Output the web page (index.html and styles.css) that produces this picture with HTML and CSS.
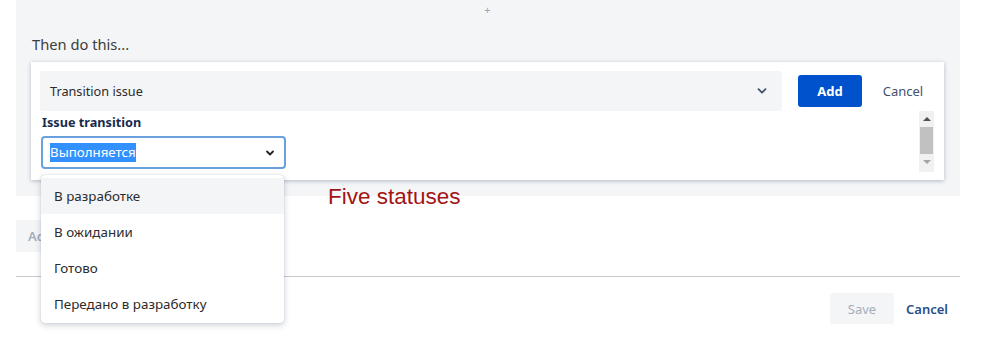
FILE: index.html
```html
<!DOCTYPE html>
<html lang="en">
<head>
    <meta charset="UTF-8">
    <title>Automation rule - Then do this</title>
    <link rel="stylesheet" href="styles.css">
</head>
<body>
    <div class="rule-panel">
        <div class="add-step">+</div>
        <div class="section-title">Then do this...</div>

        <div class="action-card">
            <div class="action-row">
                <div class="action-select">
                    <span>Transition issue</span>
                    <svg class="chevron" width="12" height="12" viewBox="0 0 12 12">
                        <path d="M2.5 4.2 L6 7.7 L9.5 4.2" fill="none" stroke="#42526e" stroke-width="1.8" stroke-linecap="round" stroke-linejoin="round"/>
                    </svg>
                </div>
                <button class="btn-primary">Add</button>
                <button class="btn-subtle">Cancel</button>
            </div>

            <div class="action-body">
                <div class="field">
                    <div class="field-label">Issue transition</div>
                    <div class="status-select">
                        <span class="selected-text">Выполняется</span>
                        <svg class="chevron" width="10" height="10" viewBox="0 0 10 10">
                            <path d="M2 3.5 L5 6.5 L8 3.5" fill="none" stroke="#222" stroke-width="1.8" stroke-linecap="round" stroke-linejoin="round"/>
                        </svg>

                        <!-- open dropdown -->
                        <ul class="status-menu">
                            <li class="active">В разработке</li>
                            <li>В ожидании</li>
                            <li>Готово</li>
                            <li>Передано в разработку</li>
                        </ul>
                    </div>
                </div>

                <div class="scrollbar">
                    <div class="scroll-up"></div>
                    <div class="scroll-thumb"></div>
                    <div class="scroll-down"></div>
                </div>
            </div>
        </div>
    </div>

    <div class="annotation">Five statuses</div>

    <div class="footer-area">
        <button class="btn-disabled">Add component</button>
        <div class="divider"></div>
        <div class="footer-actions">
            <button class="btn-save">Save</button>
            <button class="btn-link">Cancel</button>
        </div>
    </div>
</body>
</html>
```

FILE: styles.css
```css
* {
    margin: 0;
    padding: 0;
    box-sizing: border-box;
}

body {
    font-family: 'Noto Sans', 'Open Sans', sans-serif;
    background: #fff;
    color: #172b4d;
    width: 988px;
    height: 350px;
    overflow: hidden;
    position: relative;
}

button {
    font-family: inherit;
    border: none;
    cursor: pointer;
}

.rule-panel {
    margin: 0 28px 0 16px;
    height: 196px;
    background: #f4f5f7;
    padding: 0 16px 0 15px;
}

.add-step {
    height: 20px;
    line-height: 20px;
    text-align: center;
    font-size: 11px;
    color: #a0a4ab;
}

.section-title {
    margin-top: 14px;
    padding-left: 1px;
    font-size: 14.7px;
    line-height: 20px;
    color: #3d3d3d;
}

.action-card {
    margin-top: 8px;
    height: 118px;
    background: #fff;
    box-shadow: 0 1px 4px rgba(9, 30, 66, 0.28);
    padding: 9px 8px 8px 9px;
}

.action-row {
    display: flex;
    align-items: center;
    height: 40px;
}

.action-select {
    flex: 1;
    height: 40px;
    background: #f4f5f7;
    border-radius: 3px;
    display: flex;
    align-items: center;
    justify-content: space-between;
    padding: 0 14px 0 10px;
    font-size: 12.7px;
    color: #2b2b2b;
}

.btn-primary {
    margin-left: 16px;
    width: 64px;
    height: 32px;
    background: #0052cc;
    color: #fff;
    font-weight: 700;
    font-size: 13px;
    border-radius: 3px;
}

.btn-subtle {
    margin-left: 8px;
    width: 66px;
    height: 32px;
    background: transparent;
    color: #42526e;
    font-size: 13px;
}

.action-body {
    display: flex;
    justify-content: space-between;
    height: 61px;
}

.field {
    padding: 3px 0 0 1px;
}

.field-label {
    height: 16px;
    line-height: 16px;
    font-size: 12.7px;
    font-weight: 700;
    color: #172b4d;
    padding-left: 1px;
}

.status-select {
    position: relative;
    margin-top: 6px;
    width: 245px;
    height: 33px;
    border: 2px solid #6aa0dc;
    border-radius: 4px;
    display: flex;
    align-items: center;
    justify-content: space-between;
    padding: 0 9px 0 7px;
}

.selected-text {
    background: #3390ff;
    color: #fff;
    font-size: 13.3px;
    line-height: 19px;
}

.status-menu {
    position: absolute;
    top: 37px;
    left: -2px;
    width: 243px;
    list-style: none;
    background: #fff;
    border-radius: 4px;
    box-shadow: 0 2px 6px rgba(9, 30, 66, 0.22), 0 0 1px rgba(9, 30, 66, 0.3);
    padding: 3px 0 1px;
    z-index: 5;
}

.status-menu li {
    height: 36px;
    line-height: 36px;
    padding-left: 13px;
    font-size: 13.4px;
    color: #2b2b2b;
}

.status-menu li.active {
    background: #f4f5f7;
}

.scrollbar {
    width: 15px;
    height: 61px;
    margin-right: 2px;
    background: #f1f1f1;
    display: flex;
    flex-direction: column;
    align-items: center;
}

.scroll-up {
    margin-top: 6px;
    width: 0;
    height: 0;
    border-left: 4px solid transparent;
    border-right: 4px solid transparent;
    border-bottom: 4px solid #505050;
}

.scroll-thumb {
    margin-top: 6px;
    width: 13px;
    height: 27px;
    background: #c1c1c1;
}

.scroll-down {
    margin-top: 6px;
    width: 0;
    height: 0;
    border-left: 4px solid transparent;
    border-right: 4px solid transparent;
    border-top: 4px solid #a3a3a3;
}

.annotation {
    position: absolute;
    left: 328px;
    top: 185px;
    font-family: 'Liberation Sans', Arial, sans-serif;
    font-size: 22.5px;
    line-height: 24px;
    color: #a31414;
}

.footer-area {
    margin: 24px 28px 0 16px;
}

.btn-disabled {
    height: 32px;
    padding: 0 12px;
    background: #f4f5f7;
    color: #a5adba;
    font-weight: 600;
    font-size: 13px;
    border-radius: 3px;
}

.divider {
    margin-top: 24px;
    height: 1px;
    background: #c6c9ce;
}

.footer-actions {
    margin-top: 16px;
    display: flex;
    justify-content: flex-end;
}

.btn-save {
    width: 64px;
    height: 31px;
    background: #f4f5f7;
    color: #a5adba;
    font-size: 13px;
    border-radius: 3px;
}

.btn-link {
    width: 66px;
    height: 31px;
    background: transparent;
    color: #2a4f8c;
    font-size: 13px;
    font-weight: 600;
}
```
